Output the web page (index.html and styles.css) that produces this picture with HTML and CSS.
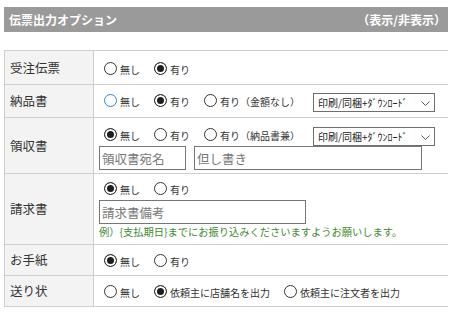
FILE: index.html
```html
<!DOCTYPE html>
<html lang="ja">
<head>
<meta charset="utf-8">
<title>伝票出力オプション</title>
<link rel="stylesheet" href="styles.css">
</head>
<body>
<div class="panel">
  <div class="panel-head">
    <span class="panel-title">伝票出力オプション</span>
    <span class="panel-toggle">（表示/非表示）</span>
  </div>
  <table class="opt-table">
    <colgroup><col class="col-label"><col class="col-body"></colgroup>
    <tr>
      <th class="label">受注伝票</th>
      <td class="body r1">
        <div class="line">
          <label class="opt"><input type="radio" name="juchu"><span>無し</span></label>
          <label class="opt"><input type="radio" name="juchu" checked><span>有り</span></label>
        </div>
      </td>
    </tr>
    <tr>
      <th class="label">納品書</th>
      <td class="body r2">
        <div class="line">
          <label class="opt"><input type="radio" name="nohin" class="is-focus"><span>無し</span></label>
          <label class="opt"><input type="radio" name="nohin" checked><span>有り</span></label>
          <label class="opt"><input type="radio" name="nohin"><span>有り（金額なし）</span></label>
          <span class="sel-wrap">
            <select class="sel"><option>印刷/同梱+ﾀﾞｳﾝﾛｰﾄﾞ</option></select>
            <svg class="chev" width="9" height="5" viewBox="0 0 9 5"><polyline points="0.5,0.5 4.5,4.5 8.5,0.5" fill="none" stroke="#555" stroke-width="1"/></svg>
          </span>
        </div>
      </td>
    </tr>
    <tr>
      <th class="label">領収書</th>
      <td class="body r3">
        <div class="line">
          <label class="opt"><input type="radio" name="ryoshu" checked><span>無し</span></label>
          <label class="opt"><input type="radio" name="ryoshu"><span>有り</span></label>
          <label class="opt"><input type="radio" name="ryoshu"><span>有り（納品書兼）</span></label>
          <span class="sel-wrap">
            <select class="sel"><option>印刷/同梱+ﾀﾞｳﾝﾛｰﾄﾞ</option></select>
            <svg class="chev" width="9" height="5" viewBox="0 0 9 5"><polyline points="0.5,0.5 4.5,4.5 8.5,0.5" fill="none" stroke="#555" stroke-width="1"/></svg>
          </span>
        </div>
        <div class="fields">
          <input type="text" class="txt txt-name" placeholder="領収書宛名">
          <input type="text" class="txt txt-memo" placeholder="但し書き">
        </div>
      </td>
    </tr>
    <tr>
      <th class="label">請求書</th>
      <td class="body r4">
        <div class="line">
          <label class="opt"><input type="radio" name="seikyu" checked><span>無し</span></label>
          <label class="opt"><input type="radio" name="seikyu"><span>有り</span></label>
        </div>
        <input type="text" class="txt txt-bill" placeholder="請求書備考">
        <p class="note">例）{支払期日}までにお振り込みくださいますようお願いします。</p>
      </td>
    </tr>
    <tr>
      <th class="label">お手紙</th>
      <td class="body r5">
        <div class="line">
          <label class="opt"><input type="radio" name="tegami" checked><span>無し</span></label>
          <label class="opt"><input type="radio" name="tegami"><span>有り</span></label>
        </div>
      </td>
    </tr>
    <tr>
      <th class="label">送り状</th>
      <td class="body r6">
        <div class="line">
          <label class="opt"><input type="radio" name="okuri"><span>無し</span></label>
          <label class="opt"><input type="radio" name="okuri" checked><span>依頼主に店舗名を出力</span></label>
          <label class="opt"><input type="radio" name="okuri"><span>依頼主に注文者を出力</span></label>
        </div>
      </td>
    </tr>
  </table>
</div>
</body>
</html>
```

FILE: styles.css
```css
* { box-sizing: border-box; }

body {
  margin: 7px 8px 0 4px;
  font-family: "Noto Sans CJK JP", "Noto Sans", sans-serif;
  color: #333;
  background: #fff;
}

.panel { width: 444px; }

.panel-head {
  height: 25px;
  background: #9a9a9a;
  color: #fff;
  font-weight: bold;
  font-size: 12px;
  line-height: 16px;
  display: flex;
  align-items: center;
  justify-content: space-between;
  padding: 0 2px 0 5px;
}

.opt-table {
  margin-top: 18px;
  width: 444px;
  table-layout: fixed;
  border-collapse: collapse;
  border: 1px solid #cfcfcf;
}

.col-label { width: 89px; }
.col-body { width: 355px; }

.opt-table th,
.opt-table td {
  border: 1px solid #cfcfcf;
}

.label {
  background: #f3f3f3;
  font-weight: normal;
  text-align: left;
  font-size: 12.5px;
  line-height: 14px;
  padding: 0 5px;
  vertical-align: middle;
  color: #333;
}

.body {
  vertical-align: top;
  padding-left: 5px;
  padding-right: 5px;
}

.r1 { padding-top: 10px; padding-bottom: 9px; }
.r2 { padding-top: 8px; padding-bottom: 5px; }
.r3 { padding-top: 9px; padding-bottom: 3px; }
.r4 { padding-top: 7px; padding-bottom: 5px; }
.r5 { padding-top: 8px; padding-bottom: 8px; }
.r6 { padding-top: 8px; padding-bottom: 8px; }

.line {
  display: flex;
  align-items: flex-start;
}

.opt {
  display: inline-flex;
  align-items: center;
  height: 14px;
  margin-right: 9px;
  font-size: 10px;
  white-space: nowrap;
}

.opt span {
  line-height: 12px;
  padding-top: 4px;
}

.opt input {
  appearance: none;
  -webkit-appearance: none;
  width: 13px;
  height: 13px;
  margin: 0 3px 0 5px;
  border: 1px solid #333;
  border-radius: 50%;
  background: #fff;
  flex: none;
}

.opt input:checked {
  background: #1e1e1e;
  box-shadow: inset 0 0 0 2px #fff;
}

.opt input.is-focus {
  border-color: #2a86e0;
}

.sel-wrap {
  position: relative;
  display: inline-block;
  margin-left: 4px;
  height: 19px;
}

.sel {
  appearance: none;
  -webkit-appearance: none;
  width: 122px;
  height: 19px;
  border: 1px solid #6f6f6f;
  border-radius: 0;
  background: #fff;
  font-family: "Noto Sans CJK JP", "Noto Sans", sans-serif;
  font-size: 10px;
  line-height: 17px;
  padding: 0 0 0 4px;
  color: #222;
  display: block;
}

.chev {
  position: absolute;
  right: 5px;
  top: 8px;
}

.fields {
  display: flex;
  gap: 8px;
}

.txt {
  height: 24px;
  border: 1px solid #767676;
  border-radius: 0;
  padding: 0 2px;
  font-family: "Noto Sans CJK JP", "Noto Sans", sans-serif;
  font-size: 12.5px;
  background: #fff;
  display: block;
}

.txt::placeholder { color: #777; }

.txt-name { width: 87px; }
.txt-memo { width: 228px; }
.txt-bill { width: 207px; margin-top: 5px; }

.note {
  margin: 1px 0 0;
  font-size: 10.25px;
  line-height: 14px;
  color: #3d8b2f;
  white-space: nowrap;
}
```
